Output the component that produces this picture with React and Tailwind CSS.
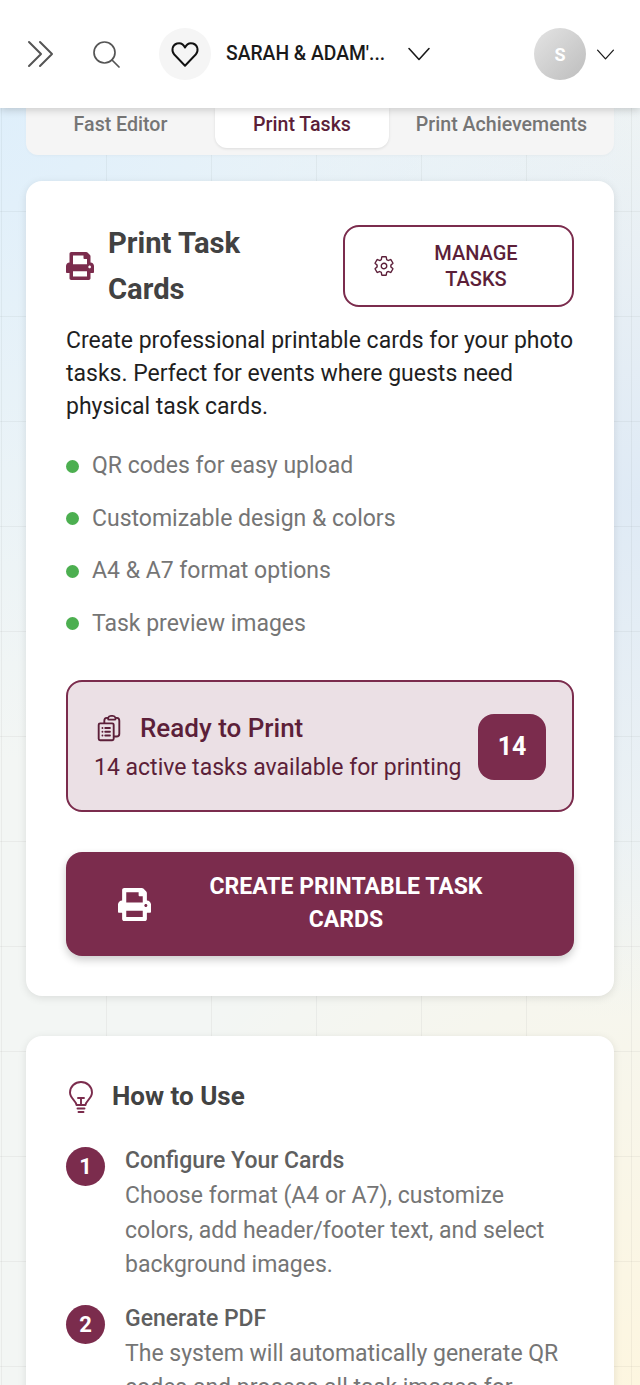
import React from "react";
import { FaPrint } from "react-icons/fa";
import { HiOutlineClipboardDocumentList } from "react-icons/hi2";
import { IoSettingsOutline } from "react-icons/io5";

const Chevron = ({ className }) => (
  <svg viewBox="0 0 24 24" fill="none" stroke="currentColor" strokeWidth="1.6" strokeLinecap="round" strokeLinejoin="round" className={className}>
    <path d="M2 6.5 12 17.5 22 6.5" />
  </svg>
);

const bullets = ["QR codes for easy upload", "Customizable design & colors", "A4 & A7 format options", "Task preview images"];

const Step = ({ n, title, children }) => (
  <div className="flex gap-5">
    <div className="w-[39px] h-[39px] shrink-0 mt-[4px] rounded-full bg-[#7b2c4d] text-white flex items-center justify-center text-[22px] font-bold">{n}</div>
    <div className="min-w-0 flex-1">
      <div className="text-[23px] leading-[36px] font-medium text-[#5f5f5f]">{title}</div>
      <div className="text-[23px] leading-[34.5px] text-[#757575]">{children}</div>
    </div>
  </div>
);

export default function App() {
  return (
    <div className="relative w-[640px] h-[1385px] overflow-hidden font-['Roboto',sans-serif] bg-[#f3f6f4] bg-[linear-gradient(rgba(0,0,0,0.045)_1px,transparent_1px),linear-gradient(90deg,rgba(0,0,0,0.045)_1px,transparent_1px),radial-gradient(circle_650px_at_0%_8%,#dfeffb,transparent),radial-gradient(circle_520px_at_100%_36%,#dfeaf5,transparent),radial-gradient(circle_560px_at_100%_100%,#fdf6e0,transparent)] bg-[size:105px_105px,105px_105px,100%_100%,100%_100%,100%_100%] bg-[position:1px_1px,1px_1px,0_0,0_0,0_0]">
      <header className="relative z-10 h-[108px] bg-white shadow-[0_2px_8px_rgba(0,0,0,0.18)] flex items-center pl-[27px] pr-[25px]">
        <svg viewBox="0 0 28 28" fill="none" stroke="#555555" strokeWidth="2" strokeLinecap="round" strokeLinejoin="round" className="w-[28px] h-[28px]">
          <path d="M2 2 14 14 2 26M13 2 25 14 13 26" />
        </svg>
        <svg viewBox="0 0 28 28" fill="none" stroke="#555555" strokeWidth="1.7" strokeLinecap="round" className="w-[28px] h-[28px] ml-[37px]">
          <circle cx="12.5" cy="12.5" r="10.5" />
          <path d="M20 20 27 27" />
        </svg>
        <div className="w-[52px] h-[52px] ml-[39px] rounded-full bg-[#f5f5f5] flex items-center justify-center">
          <svg viewBox="0 0 28 28" fill="none" stroke="#111111" strokeWidth="1.8" strokeLinejoin="round" className="w-[30px] h-[30px]">
            <path d="M14 25 4 14.500C1 11 2 5.500 6.500 4.200 9.800 3.300 12.600 5 14 8c1.400-3 4.200-4.700 7.500-3.800C26 5.500 27 11 24 14.500L14 25Z" />
          </svg>
        </div>
        <div className="ml-[15px] mt-[1px] text-[19.3px] font-medium text-[#1a1a1a] whitespace-nowrap">SARAH &amp; ADAM'...</div>
        <Chevron className="w-[24px] h-[24px] ml-[22px] text-[#1a1a1a]" />
        <div className="ml-auto w-[52px] h-[52px] rounded-full bg-[linear-gradient(135deg,#e4e4e4,#bdbdbd)] flex items-center justify-center text-white font-bold text-[18px]">S</div>
        <Chevron className="w-[19px] h-[19px] ml-[10px] text-[#1a1a1a]" />
      </header>

      <main className="px-[26px]">
        <div className="h-[47px] bg-[#f5f5f5] rounded-b-[12px] flex pb-[7px] text-[19.6px] font-medium text-[#757575] shadow-[0_1px_3px_rgba(0,0,0,0.03)]">
          <div className="w-[189px] flex items-center justify-center pb-[7px]">Fast Editor</div>
          <div className="w-[174px] flex items-center justify-center pb-[7px] bg-white rounded-b-[12px] text-[#5c1f39] shadow-[0_1px_3px_rgba(0,0,0,0.1)]">Print Tasks</div>
          <div className="flex-1 flex items-center justify-center pb-[7px] whitespace-nowrap">Print Achievements</div>
        </div>

        <section className="mt-[26px] h-[815px] bg-white rounded-[16px] shadow-[0_2px_8px_rgba(0,0,0,0.1)] p-[40px] pt-[39px]">
          <div className="flex items-center h-[92px]">
            <FaPrint className="w-[28px] h-[28px] text-[#7b2c4d] shrink-0" />
            <h2 className="ml-[14px] w-[170px] text-[29.2px] leading-[46px] font-bold text-[#424242] mt-[-1px]">Print Task Cards</h2>
            <button className="ml-auto w-[231px] h-[82px] border-2 border-[#7b2c4d] rounded-[16px] flex items-center pl-[28px] text-[#5c1f39]">
              <IoSettingsOutline className="w-[22px] h-[22px] shrink-0" />
              <span className="ml-[31px] w-[100px] text-center text-[20px] leading-[26px] font-medium">MANAGE TASKS</span>
            </button>
          </div>
          <p className="mt-[12px] text-[23px] leading-[33px] text-[#1f1f1f]">Create professional printable cards for your photo tasks. Perfect for events where guests need physical task cards.</p>
          <ul className="mt-[17px] flex flex-col">
            {bullets.map((b) => (
              <li key={b} className="h-[52.5px] flex items-center gap-[13px] text-[23px] text-[#757575]">
                <span className="w-[13px] h-[13px] rounded-full bg-[#4caf50]" />
                {b}
              </li>
            ))}
          </ul>
          <div className="mt-[30px] h-[132px] rounded-[16px] border-2 border-[#7b2c4d] bg-[#ebe0e5] flex items-center pl-[26px] pr-[26px]">
            <div className="flex-1 min-w-0 text-[#5c1f39] pt-[2px]">
              <div className="flex items-center gap-[16px]">
                <HiOutlineClipboardDocumentList className="w-[30px] h-[30px] shrink-0" />
                <span className="text-[26px] leading-[36px] font-medium">Ready to Print</span>
              </div>
              <div className="text-[23px] leading-[33px] whitespace-nowrap mt-[5px]">14 active tasks available for printing</div>
            </div>
            <div className="w-[68px] h-[66px] mt-[1px] rounded-[16px] bg-[#7b2c4d] text-white flex items-center justify-center text-[25px] font-bold">14</div>
          </div>
          <button className="mt-[40px] w-full h-[104px] rounded-[16px] bg-[#7b2c4d] text-white shadow-[0_4px_8px_rgba(0,0,0,0.2)] flex items-center pl-[52px]">
            <FaPrint className="w-[33px] h-[33px] shrink-0" />
            <span className="ml-[45px] w-[300px] pb-[3px] text-center text-[23px] leading-[33px] font-bold">CREATE PRINTABLE TASK CARDS</span>
          </button>
        </section>

        <section className="mt-[40px] bg-white rounded-t-[16px] shadow-[0_2px_8px_rgba(0,0,0,0.1)] px-[40px] pt-[40px] pb-[40px]">
          <div className="flex items-center gap-[17px] h-[40px]">
            <svg viewBox="0 0 28 34" fill="none" stroke="#7b2c4d" strokeWidth="1.9" strokeLinecap="round" strokeLinejoin="round" className="w-[28px] h-[34px] ml-[1px] shrink-0 mt-[2px]">
              <path d="M9.500 25C9.500 21 3 18.500 3 12.500 3 6.500 8 2 14 2s11 4.500 11 10.500C25 18.500 18.500 21 18.500 25H9.500Z" />
              <path d="M11 18h6M14 18v7M10.500 28.500h7M11.500 32h5" />
            </svg>
            <h3 className="text-[26px] font-bold text-[#424242]">How to Use</h3>
          </div>
          <div className="mt-[27px] flex flex-col gap-[18px]">
            <Step n="1" title="Configure Your Cards">Choose format (A4 or A7), customize colors, add header/footer text, and select background images.</Step>
            <Step n="2" title="Generate PDF">The system will automatically generate QR codes and process all task images for printing.</Step>
          </div>
        </section>
      </main>
    </div>
  );
}
